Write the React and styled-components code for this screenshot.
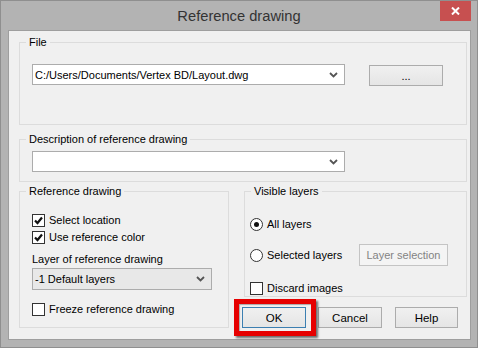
import React from 'react';
import styled, { createGlobalStyle } from 'styled-components';

const GlobalStyle = createGlobalStyle`
  body {
    margin: 0;
    font-family: "Liberation Sans", Arial, sans-serif;
    font-size: 11px;
    color: #000;
  }
`;

const Window = styled.div`
  width: 478px;
  height: 348px;
  box-sizing: border-box;
  background: #b3b3b3;
  border: 1px solid #8f8f8f;
`;

const TitleBar = styled.div`
  height: 29px;
  display: grid;
  grid-template-columns: 1fr auto 1fr;
`;

const Title = styled.div`
  grid-column: 2;
  font-size: 14.7px;
  line-height: 30px;
  color: #333;
`;

const CloseButton = styled.div`
  grid-column: 3;
  justify-self: end;
  width: 31px;
  height: 20px;
  margin-right: 6px;
  background: #c75050;
  display: flex;
  align-items: center;
  justify-content: center;
`;

const Client = styled.div`
  margin-left: 7px;
  width: 463px;
  height: 310px;
  box-sizing: border-box;
  border: 1px solid #9e9e9e;
  background: #f0f0f0;
  padding: 11px 3px 0 10px;
`;

const Group = styled.div`
  position: relative;
  box-sizing: border-box;
  border: 1px solid #dcdcdc;
  width: ${(p) => p.$width || 'auto'};
  height: ${(p) => p.$height}px;
  margin-top: ${(p) => p.$top || 0}px;
  padding: ${(p) => p.$pad};
`;

const Legend = styled.span`
  position: absolute;
  top: -8px;
  left: 6px;
  padding: 0 3px;
  background: #f0f0f0;
  line-height: 15px;
`;

const Row = styled.div`
  display: flex;
  align-items: ${(p) => p.$align || 'center'};
  gap: ${(p) => p.$gap || 0}px;
  margin-top: ${(p) => p.$top || 0}px;
`;

const Combo = styled.div`
  box-sizing: border-box;
  width: ${(p) => p.$width}px;
  height: ${(p) => p.$height || 21}px;
  border: 1px solid #acacac;
  background: ${(p) => (p.$flat ? '#e8e8e8' : '#fff')};
  display: flex;
  align-items: center;
  padding: 0 6px 0 2px;
  white-space: nowrap;
`;

const ComboText = styled.span`
  flex: 1;
`;

const Button = styled.div`
  box-sizing: border-box;
  width: ${(p) => p.$width}px;
  height: ${(p) => p.$height || 21}px;
  margin-top: ${(p) => p.$top || 0}px;
  border: 1px solid ${(p) => (p.$focus ? '#3c7fb1' : p.$disabled ? '#c4c4c4' : '#acacac')};
  background: ${(p) => (p.$disabled ? '#f4f4f4' : 'linear-gradient(#f0f0f0, #e5e5e5)')};
  color: ${(p) => (p.$disabled ? '#838383' : '#000')};
  display: flex;
  align-items: ${(p) => (p.$low ? 'flex-end' : 'center')};
  padding-bottom: ${(p) => (p.$low ? 3 : 0)}px;
  justify-content: center;
  font-size: ${(p) => (p.$big ? 11.5 : 11)}px;
`;

const Box = styled.span`
  box-sizing: border-box;
  width: 13px;
  height: 13px;
  flex: none;
  border: 1px solid #333;
  background: #fff;
  border-radius: ${(p) => (p.$round ? '50%' : '0')};
  display: flex;
  align-items: center;
  justify-content: center;
`;

const Dot = styled.span`
  width: 5px;
  height: 5px;
  border-radius: 50%;
  background: #111;
`;

const Option = styled.div`
  display: flex;
  align-items: center;
  gap: 4px;
  height: 13px;
  line-height: 13px;
  margin-top: ${(p) => p.$top || 0}px;
`;

const FieldLabel = styled.div`
  margin-top: 8px;
  line-height: 15px;
  margin-bottom: 1px;
`;

const BottomRow = styled.div`
  display: flex;
  margin-top: 9px;
`;

const RightColumn = styled.div`
  margin-left: 15px;
  width: 223px;
`;

const ButtonRow = styled.div`
  display: flex;
  margin: 10px 0 0 -2px;
`;

const Highlight = styled.div`
  position: relative;
  margin-right: 12px;
`;

const RedFrame = styled.span`
  position: absolute;
  left: -8px;
  top: -8px;
  right: -10px;
  bottom: -8px;
  border: 5px solid #e60000;
  box-shadow: 2px 2px 2px rgba(0, 0, 0, 0.55), inset 1px 1px 1px rgba(0, 0, 0, 0.3);
`;

const Chevron = () => (
  <svg width="9" height="6" viewBox="0 0 9 6">
    <polyline points="1,1 4.5,4.5 8,1" fill="none" stroke="#555" strokeWidth="1.8" />
  </svg>
);

const Check = () => (
  <svg width="9" height="9" viewBox="0 0 9 9">
    <polyline points="1,4.5 3.5,7 8,1.5" fill="none" stroke="#111" strokeWidth="2.2" />
  </svg>
);

const CheckOption = ({ checked, top, children }) => (
  <Option $top={top}>
    <Box>{checked && <Check />}</Box>
    {children}
  </Option>
);

const RadioOption = ({ checked, children }) => (
  <Option>
    <Box $round>{checked && <Dot />}</Box>
    {children}
  </Option>
);

const App = () => (
  <>
    <GlobalStyle />
    <Window>
      <TitleBar>
        <Title>Reference drawing</Title>
        <CloseButton>
          <svg width="9" height="8" viewBox="0 0 9 8">
            <path d="M1 0.5 L8 7.5 M8 0.5 L1 7.5" stroke="#fff" strokeWidth="2" />
          </svg>
        </CloseButton>
      </TitleBar>
      <Client>
        <Group $height={83} $pad="21px 0 0 12px">
          <Legend>File</Legend>
          <Row $align="flex-start" $gap={24}>
            <Combo $width={313}>
              <ComboText>C:/Users/Documents/Vertex BD/Layout.dwg</ComboText>
              <Chevron />
            </Combo>
            <Button $width={74} $top={1} $low>...</Button>
          </Row>
        </Group>

        <Group $height={43} $top={14} $pad="11px 0 0 12px">
          <Legend>Description of reference drawing</Legend>
          <Combo $width={313}>
            <ComboText />
            <Chevron />
          </Combo>
        </Group>

        <BottomRow>
          <Group $width="210px" $height={137} $pad="22px 0 0 12px">
            <Legend>Reference drawing</Legend>
            <CheckOption checked>Select location</CheckOption>
            <CheckOption checked top={4}>Use reference color</CheckOption>
            <FieldLabel>Layer of reference drawing</FieldLabel>
            <Combo $width={180} $height={22} $flat>
              <ComboText>-1 Default layers</ComboText>
              <Chevron />
            </Combo>
            <CheckOption top={13}>Freeze reference drawing</CheckOption>
          </Group>

          <RightColumn>
            <Group $height={106} $pad="26px 0 0 5px">
              <Legend>Visible layers</Legend>
              <RadioOption checked>All layers</RadioOption>
              <Row $top={13}>
                <RadioOption>Selected layers</RadioOption>
                <Button $width={89} $height={22} $disabled style={{ marginLeft: 'auto', marginRight: 18 }}>
                  Layer selection
                </Button>
              </Row>
              <CheckOption top={16}>Discard images</CheckOption>
            </Group>
            <ButtonRow>
              <Highlight>
                <Button $width={64} $focus $big>OK</Button>
                <RedFrame />
              </Highlight>
              <Button $width={64} $big style={{ marginRight: 13 }}>Cancel</Button>
              <Button $width={63} $big>Help</Button>
            </ButtonRow>
          </RightColumn>
        </BottomRow>
      </Client>
    </Window>
  </>
);

export default App;
